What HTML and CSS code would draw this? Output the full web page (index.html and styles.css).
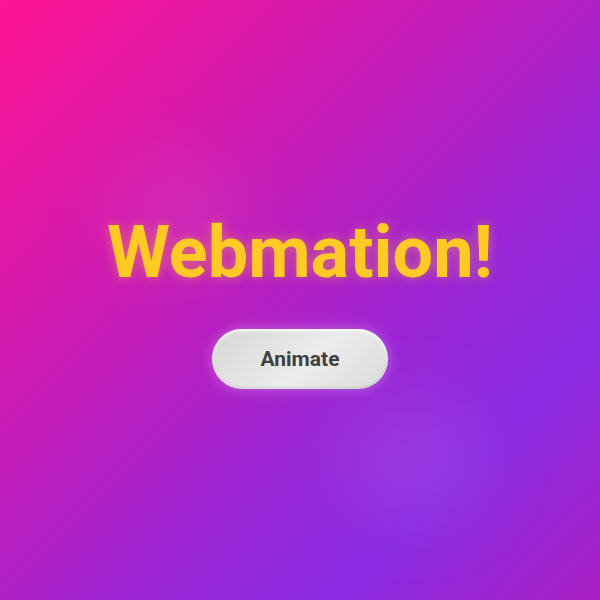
FILE: index.html
```html
<!DOCTYPE html>
<html>
<head>
<meta charset="utf-8">
<link rel="stylesheet" href="styles.css">
</head>
<body>
<div class="stage">
  <div class="glow glow-a"></div>
  <div class="glow glow-b"></div>
  <div class="content">
    <h1 class="title">Webmation!</h1>
    <button class="btn">Animate</button>
  </div>
</div>
</body>
</html>
```

FILE: styles.css
```css
html, body {
  margin: 0;
  padding: 0;
  width: 100%;
  height: 100%;
}
body {
  font-family: Roboto, "Liberation Sans", sans-serif;
  overflow: hidden;
}
.stage {
  position: relative;
  width: 600px;
  height: 600px;
  overflow: hidden;
  background: linear-gradient(135deg, #ff1493 0%, #c41cb8 38%, #9a26d6 62%, #8a2be2 78%, #a91fc4 100%);
  display: flex;
  align-items: center;
  justify-content: center;
}
.glow {
  position: absolute;
  border-radius: 50%;
  filter: blur(35px);
}
.glow-a {
  left: 115px;
  top: 160px;
  width: 130px;
  height: 110px;
  background: rgba(255, 190, 230, 0.1);
}
.glow-b {
  left: 340px;
  top: 400px;
  width: 150px;
  height: 120px;
  background: rgba(220, 170, 255, 0.13);
}
.content {
  position: relative;
  display: flex;
  flex-direction: column;
  align-items: center;
  gap: 40px;
  margin-top: 6px;
}
.title {
  margin: 0;
  font-size: 72px;
  font-weight: 700;
  line-height: 1;
  color: #ffc926;
  text-shadow: 0 0 12px rgba(255, 200, 40, 0.45);
  letter-spacing: 0;
}
.btn {
  width: 176px;
  height: 60px;
  border: none;
  border-radius: 30px;
  background: linear-gradient(135deg, #d6d6d6 0%, #ececec 55%, #dadada 100%);
  box-shadow: 0 0 14px rgba(255, 255, 255, 0.3), inset 0 2px 3px rgba(255, 255, 255, 0.8), inset 0 -2px 3px rgba(0, 0, 0, 0.08);
  font-family: Roboto, "Liberation Sans", sans-serif;
  font-size: 21px;
  font-weight: 700;
  color: #404040;
  padding: 0;
}
```
